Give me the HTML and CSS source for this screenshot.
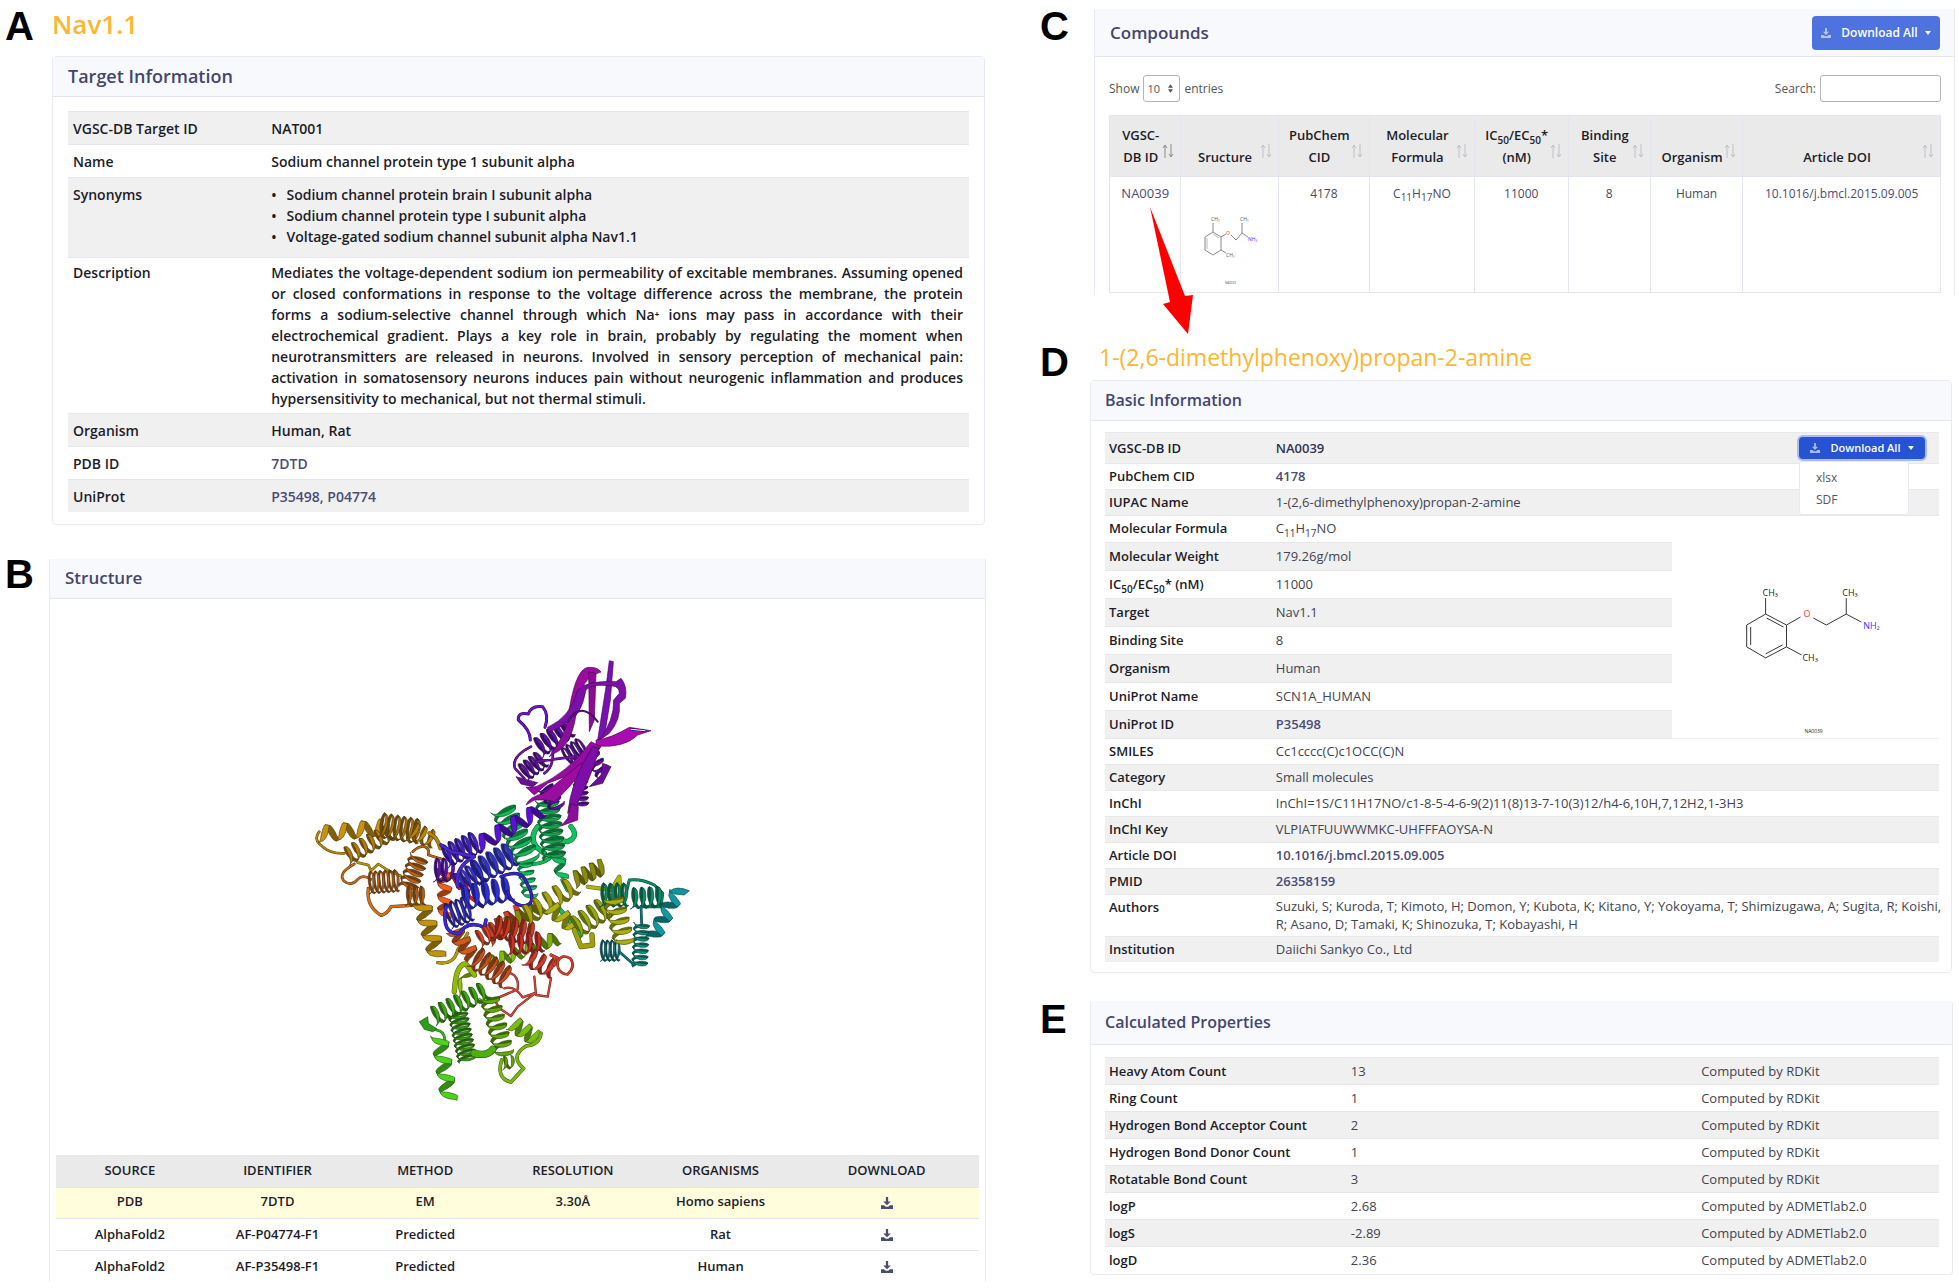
FILE: index.html
```html
<!DOCTYPE html>
<html lang="en">
<head>
<meta charset="utf-8">
<title>VGSC-DB</title>
<link rel="stylesheet" href="styles.css">
</head>
<body>
<svg class="defs" aria-hidden="true">
  <symbol id="download" viewBox="0 0 16 16">
    <path d="M6.5 0h3v6H13L8 11 3 6h3.500zM0 11h4l2.500 2h3L12 11h4v5H0z" fill="currentColor"/>
  </symbol>
  <symbol id="sort" viewBox="0 0 12 16">
    <path class="up" d="M3 15V2M1 5l2-3 2 3"/>
    <path class="down" d="M9 1v13M7 11l2 3 2-3"/>
  </symbol>
</svg>
<main class="page">
  <div class="column">
    <section class="panel target">
      <span class="letter">A</span>
      <div class="content">
        <h1 class="name">Nav1.1</h1>
        <article class="card">
          <h2 class="card-head">Target Information</h2>
          <div class="card-body">
            <table class="facts">
              <tr><th>VGSC-DB Target ID</th><td>NAT001</td></tr>
              <tr><th>Name</th><td>Sodium channel protein type 1 subunit alpha</td></tr>
              <tr class="roomy"><th>Synonyms</th><td><ul><li>Sodium channel protein brain I subunit alpha</li><li>Sodium channel protein type I subunit alpha</li><li>Voltage-gated sodium channel subunit alpha Nav1.1</li></ul></td></tr>
              <tr class="prose"><th>Description</th><td>Mediates the voltage-dependent sodium ion permeability of excitable membranes. Assuming opened or closed conformations in response to the voltage difference across the membrane, the protein forms a sodium-selective channel through which Na⁺ ions may pass in accordance with their electrochemical gradient. Plays a key role in brain, probably by regulating the moment when neurotransmitters are released in neurons. Involved in sensory perception of mechanical pain: activation in somatosensory neurons induces pain without neurogenic inflammation and produces hypersensitivity to mechanical, but not thermal stimuli.</td></tr>
              <tr><th>Organism</th><td>Human, Rat</td></tr>
              <tr><th>PDB ID</th><td><a href="#7DTD">7DTD</a></td></tr>
              <tr><th>UniProt</th><td><a href="#P35498">P35498, P04774</a></td></tr>
            </table>
          </div>
        </article>
      </div>
    </section>
    <section class="panel structure">
      <span class="letter">B</span>
      <div class="content">
        <article class="card open">
          <h2 class="card-head">Structure</h2>
          <div class="viewer"><svg id="protein" viewBox="-9 -123 1380 1668" role="img" aria-label="Structure of 7DTD"></svg></div>
          <table class="models">
            <thead><tr><th>SOURCE</th><th>IDENTIFIER</th><th>METHOD</th><th>RESOLUTION</th><th>ORGANISMS</th><th class="wide">DOWNLOAD</th></tr></thead>
            <tbody>
              <tr class="active"><td>PDB</td><td>7DTD</td><td>EM</td><td>3.30Å</td><td>Homo sapiens</td><td><a href="#pdb" aria-label="Download 7DTD"><svg class="icon"><use href="#download"/></svg></a></td></tr>
              <tr><td>AlphaFold2</td><td>AF-P04774-F1</td><td>Predicted</td><td></td><td>Rat</td><td><a href="#rat" aria-label="Download AF-P04774-F1"><svg class="icon"><use href="#download"/></svg></a></td></tr>
              <tr><td>AlphaFold2</td><td>AF-P35498-F1</td><td>Predicted</td><td></td><td>Human</td><td><a href="#human" aria-label="Download AF-P35498-F1"><svg class="icon"><use href="#download"/></svg></a></td></tr>
            </tbody>
          </table>
        </article>
      </div>
    </section>
  </div>

  <div class="column">
    <section class="panel compounds">
      <span class="letter">C</span>
      <div class="content">
        <article class="card open">
          <div class="card-head"><h2>Compounds</h2><button class="download" type="button"><svg class="icon"><use href="#download"/></svg>Download All<i class="caret"></i></button></div>
          <div class="card-body">
            <div class="tools">
              <label>Show <span class="picker"><select><option>10</option></select><svg viewBox="0 0 6 10"><path d="M3 0l3 4H0zM3 10L0 6h6z"/></svg></span> entries</label>
              <label>Search: <input type="search"></label>
            </div>
            <table class="grid">
              <colgroup><col class="c1"><col class="c2"><col class="c3"><col class="c4"><col class="c5"><col class="c6"><col class="c7"><col class="c8"></colgroup>
              <thead><tr>
                <th class="sorted">VGSC-<br>DB ID<svg><use href="#sort"/></svg></th>
                <th>Sructure<svg><use href="#sort"/></svg></th>
                <th>PubChem<br>CID<svg><use href="#sort"/></svg></th>
                <th>Molecular<br>Formula<svg><use href="#sort"/></svg></th>
                <th>IC<sub>50</sub>/EC<sub>50</sub>*<br>(nM)<svg><use href="#sort"/></svg></th>
                <th>Binding<br>Site<svg><use href="#sort"/></svg></th>
                <th>Organism<svg><use href="#sort"/></svg></th>
                <th>Article DOI<svg><use href="#sort"/></svg></th>
              </tr></thead>
              <tbody><tr>
                <td class="id"><a href="#NA0039">NA0039</a></td>
                <td><svg class="thumb" viewBox="0 0 56 74">
                  <path d="M11 12v9l8 5v13l-8 5-8-5V26l8-5M19 26l5-3M29 24l5 5 6-7V12M40 22l6 4M19 39l5 3" fill="none" stroke="#888"/>
                  <path d="M5 27v11M11 23l6 4" fill="none" stroke="#bbb"/>
                  <g font-size="5" fill="#555"><text x="9" y="10">CH₃</text><text x="38" y="10">CH₃</text><text x="24" y="46">CH₃</text><text x="23" y="73" font-size="3">NA0039</text></g>
                  <text x="24" y="24" font-size="5" fill="#f33">O</text><text x="46" y="30" font-size="5" fill="#33f">NH₂</text>
                </svg></td>
                <td>4178</td><td>C<sub>11</sub>H<sub>17</sub>NO</td><td>11000</td><td>8</td><td>Human</td><td><a href="#doi">10.1016/j.bmcl.2015.09.005</a></td>
              </tr></tbody>
            </table>
          </div>
        </article>
      </div>
      <svg class="arrow" viewBox="0 0 43 127"><path d="M0 0L35 89l8-1-5 39L13 97l7-2z" fill="#f00"/></svg>
    </section>

    <section class="panel basic">
      <span class="letter">D</span>
      <div class="content">
        <h1 class="name">1-(2,6-dimethylphenoxy)propan-2-amine</h1>
        <article class="card">
          <h2 class="card-head">Basic Information</h2>
          <div class="card-body">
            <div class="menu-box">
              <button class="download active" type="button"><svg class="icon"><use href="#download"/></svg>Download All<i class="caret"></i></button>
              <div class="menu"><a href="#xlsx">xlsx</a><a href="#sdf">SDF</a></div>
            </div>
            <table class="facts light">
              <colgroup><col class="k"><col><col class="pic"></colgroup>
              <tr class="first"><th>VGSC-DB ID</th><td colspan="2"><b>NA0039</b></td></tr>
              <tr><th>PubChem CID</th><td colspan="2"><a href="#4178"><b>4178</b></a></td></tr>
              <tr><th>IUPAC Name</th><td colspan="2">1-(2,6-dimethylphenoxy)propan-2-amine</td></tr>
              <tr class="formula"><th>Molecular Formula</th><td>C<sub>11</sub>H<sub>17</sub>NO</td>
                <td class="picture" rowspan="8"><svg viewBox="0 -26 268 222">
                  <path d="M94 56v16l21 11v22l-21 11-19-11V83l19-11M79 85v18M95 76l17 9M94 112l17-9M115 83l14-8M142 76l13 7 20-11V56M175 72l15 8M115 105l15 8" fill="none" stroke="#333"/>
                  <g font-size="9" fill="#222"><text x="91" y="54">CH₃</text><text x="171" y="54">CH₃</text><text x="131" y="119">CH₃</text></g>
                  <text x="132" y="75" font-size="9" fill="#f33">O</text><text x="192" y="87" font-size="9" fill="#33f">NH₂</text><text x="133" y="191" font-size="5" fill="#222">NA0039</text>
                </svg></td></tr>
              <tr class="mid"><th>Molecular Weight</th><td>179.26g/mol</td></tr>
              <tr class="mid"><th>IC<sub>50</sub>/EC<sub>50</sub>* (nM)</th><td>11000</td></tr>
              <tr class="mid"><th>Target</th><td>Nav1.1</td></tr>
              <tr class="mid"><th>Binding Site</th><td>8</td></tr>
              <tr class="mid"><th>Organism</th><td>Human</td></tr>
              <tr class="mid"><th>UniProt Name</th><td>SCN1A_HUMAN</td></tr>
              <tr class="mid"><th>UniProt ID</th><td><a href="#P35498"><b>P35498</b></a></td></tr>
              <tr><th>SMILES</th><td colspan="2">Cc1cccc(C)c1OCC(C)N</td></tr>
              <tr><th>Category</th><td colspan="2">Small molecules</td></tr>
              <tr><th>InChI</th><td colspan="2">InChI=1S/C11H17NO/c1-8-5-4-6-9(2)11(8)13-7-10(3)12/h4-6,10H,7,12H2,1-3H3</td></tr>
              <tr><th>InChI Key</th><td colspan="2">VLPIATFUUWWMKC-UHFFFAOYSA-N</td></tr>
              <tr><th>Article DOI</th><td colspan="2"><a href="#doi"><b>10.1016/j.bmcl.2015.09.005</b></a></td></tr>
              <tr><th>PMID</th><td colspan="2"><a href="#pmid"><b>26358159</b></a></td></tr>
              <tr class="authors"><th>Authors</th><td colspan="2">Suzuki, S; Kuroda, T; Kimoto, H; Domon, Y; Kubota, K; Kitano, Y; Yokoyama, T; Shimizugawa, A; Sugita, R; Koishi,<br>R; Asano, D; Tamaki, K; Shinozuka, T; Kobayashi, H</td></tr>
              <tr><th>Institution</th><td colspan="2">Daiichi Sankyo Co., Ltd</td></tr>
            </table>
          </div>
        </article>
      </div>
    </section>

    <section class="panel properties">
      <span class="letter">E</span>
      <div class="content">
        <article class="card">
          <h2 class="card-head">Calculated Properties</h2>
          <div class="card-body">
            <table class="facts light">
              <colgroup><col class="p1"><col class="p2"><col></colgroup>
              <tr><th>Heavy Atom Count</th><td>13</td><td>Computed by RDKit</td></tr>
              <tr><th>Ring Count</th><td>1</td><td>Computed by RDKit</td></tr>
              <tr><th>Hydrogen Bond Acceptor Count</th><td>2</td><td>Computed by RDKit</td></tr>
              <tr><th>Hydrogen Bond Donor Count</th><td>1</td><td>Computed by RDKit</td></tr>
              <tr><th>Rotatable Bond Count</th><td>3</td><td>Computed by RDKit</td></tr>
              <tr><th>logP</th><td>2.68</td><td>Computed by ADMETlab2.0</td></tr>
              <tr><th>logS</th><td>-2.89</td><td>Computed by ADMETlab2.0</td></tr>
              <tr><th>logD</th><td>2.36</td><td>Computed by ADMETlab2.0</td></tr>
            </table>
          </div>
        </article>
      </div>
    </section>
  </div>
</main>
<script src="protein.js"></script>
</body>
</html>
```
FILE: styles.css
```css
* { box-sizing: border-box; }
body { margin: 0; background: #fff; color: #1c1c28; font: 14px/21px "Open Sans", "Noto Sans", sans-serif; }
h1, h2 { margin: 0; font-weight: 600; }
a { color: #4b4c74; text-decoration: none; }
b { font-weight: 600; }
sub { font-size: 10px; line-height: 0; }
table { width: 100%; border-collapse: collapse; table-layout: fixed; }
th, td { padding: 0; font-weight: 600; }
.defs { position: absolute; width: 0; height: 0; }

.page { display: grid; grid-template-columns: minmax(0, 986fr) minmax(0, 915fr); column-gap: 54px; padding-right: 4px; }
.panel { display: grid; grid-template-columns: 49px minmax(0, 1fr); position: relative; }
.column + .column .panel { grid-template-columns: 50px minmax(0, 1fr); }
.letter { font: bold 40px/40px "Liberation Sans", Arial, sans-serif; color: #000; }
.column:first-child .letter { padding-left: 5px; }
.name { color: #fbb634; }

.card { border: 1px solid #e9ebf4; border-radius: 4px; }
.card.open { border-top: 0; border-bottom: 0; border-radius: 0; }
.card-head { display: flex; align-items: center; justify-content: space-between; height: 40px; padding: 0 15px 1px; background: #f8f9fd; border-bottom: 1px solid #e3e6f0; color: #45466e; font-size: 17px; line-height: 24px; }
.card-head h2 { font-size: 17px; }
.card-body { padding: 12px 15px; position: relative; }

.facts th, .facts td { padding: 6px 6px 5px 5px; border-top: 1px solid #e6e8ee; text-align: left; vertical-align: top; }
.facts th { width: 22%; }
.facts tr:nth-child(odd) > * { background: #f0f0f0; }
.facts ul { margin: 0; padding: 0; list-style: none; }
.facts li { display: flex; gap: 10px; }
.facts li::before { content: "•"; }
.facts .roomy > * { padding-bottom: 10px; }
.facts .prose td { text-align: justify; }
.facts .prose > * { padding: 4px 6px 4px 5px; }

.target { height: 526px; }
.target .letter { padding-top: 6px; }
.target .content { padding: 0 1px 0 3px; }
.target .name { height: 56px; padding-top: 6px; font-size: 26px; line-height: 36px; }
.target .card-head { font-size: 18px; }
.target .card-body { padding-top: 14px; }

.structure { margin-top: 32px; }
.structure .letter { margin-top: -4px; }
.structure .content { padding-top: 1px; }
.viewer { height: 556px; display: flex; justify-content: center; }
.viewer svg { width: 460px; height: 556px; }
.models { width: auto; min-width: calc(100% - 12px); margin: 0 6px; font-size: 13px; text-align: center; }
.models th { width: 16%; }
.models th, .models td { height: 32px; border-bottom: 1px solid #e3e6f0; }
.models thead { background: #eaeaea; }
.models .wide { width: 20%; }
.models .active { background: #fffddc; }
.models .active td { height: 31px; padding-bottom: 2px; }
.models tr:last-child td { border-bottom: 0; }
.icon { width: 12px; height: 12px; vertical-align: middle; }

.download { display: flex; align-items: center; justify-content: center; gap: 10px; border: 0; border-radius: 4px; background: #4e73df; color: #fff; font: 600 12px/16px "Open Sans", "Noto Sans", sans-serif; width: 128px; height: 34px; padding: 0; }
.download .icon { width: 10px; height: 12px; opacity: .6; }
.caret { border: 3px solid transparent; border-top: 4px solid #fff; border-bottom: 0; margin-left: -3px; }

.compounds { padding-top: 9px; height: 344px; }
.compounds .letter { margin-top: -3px; }
.compounds .content { padding-left: 4px; height: 286px; overflow: hidden; }
.compounds .card-head { height: 48px; padding: 1px 14px 0 15px; }
.compounds .card-body { padding: 18px 13px 0 14px; height: 239px; }
.tools { display: flex; justify-content: space-between; margin-bottom: 13px; font-size: 12px; color: #555; }
.tools label { display: flex; align-items: center; gap: 4px; }
.picker { display: flex; align-items: center; position: relative; }
.picker svg { position: absolute; right: 7px; width: 5px; height: 9px; fill: #555; }
.tools select, .tools input { height: 27px; border: 1px solid #b5b5b5; border-radius: 3px; background: #fff; color: #555; font: 11px "Open Sans", sans-serif; outline: 0; }
.tools select { appearance: none; width: 37px; padding: 0 3px; }
.tools input { width: 121px; }
.grid { font-size: 12px; text-align: center; }
.grid .c1 { width: 8.600%; } .grid .c2 { width: 11.700%; } .grid .c3 { width: 11%; } .grid .c4 { width: 12.600%; }
.grid .c5 { width: 11.300%; } .grid .c6 { width: 9.900%; } .grid .c7 { width: 11.100%; }
.grid th, .grid td { border: 1px solid #e3e6f0; position: relative; }
.grid th { height: 61px; padding: 0 12px 8px 3px; background: #eaeaea; font-size: 13px; line-height: 22px; vertical-align: bottom; white-space: nowrap; }
.grid th svg { position: absolute; right: 6px; top: 27px; width: 12px; height: 16px; fill: none; stroke: #c0c0c8; }
.grid .sorted svg { stroke: #8a8a94; }
.grid td { height: 116px; padding: 6px 0 0; font-weight: 400; color: #4a4a5c; vertical-align: top; white-space: nowrap; }
.grid .id { font-size: 13px; }
.thumb { display: block; width: 56px; height: 74px; margin: 28px auto 0; }
.arrow { position: absolute; left: 110px; top: 207px; width: 43px; height: 127px; }

.basic .letter { margin-top: -2px; }
.basic .content { padding-right: 3px; }
.basic .name { height: 36px; padding-left: 9px; font-size: 23px; line-height: 27px; font-weight: 400; }
.basic .card-head { font-size: 16px; padding: 0 14px 2px; }
.basic .card-body { padding: 11px 12px 10px 14px; }
.light { font-size: 13px; line-height: 20px; }
.light td { font-weight: 400; color: #43434f; }
.light b { color: #33334c; }
.light a b { color: #4b4c74; }
.facts.light th, .facts.light td { width: auto; padding: 2px 0 3px 4px; }
.light .k { width: 20%; }
.light .pic { width: 32%; }
.facts.light .first > * { padding: 5px 0 5px 4px; }
.facts.light .formula > * { padding: 2px 0 4px 4px; }
.facts.light .mid > * { padding: 3px 0 4px 4px; }
.facts.light .formula .picture { padding: 0; background: #fff; vertical-align: top; border-bottom: 1px solid #f0f0f4; }
.picture svg { display: block; width: 100%; height: 222px; }
.light .authors td { line-height: 18px; white-space: nowrap; }
.menu-box { position: absolute; right: 26px; top: 16px; z-index: 1; }
.menu-box .download { width: 126px; height: 22px; font-size: 11px; background: #2653d4; box-shadow: 0 0 0 2px #a9bbf0; }
.menu { width: 110px; height: 54px; margin-top: 2px; padding: 5px 16px; background: #fff; border: 1px solid #e8eaf2; border-radius: 3px; display: flex; flex-direction: column; font-size: 12px; line-height: 22px; }
.menu a { color: #55555f; }

.properties { margin-top: 27px; }
.properties .letter { margin-top: -1px; }
.properties .content { padding-right: 2px; }
.properties .card { border-top-color: #fff; }
.properties .card-head { font-size: 16px; height: 44px; padding: 0 14px 1px; }
.properties .card-body { padding: 12px 13px 1px 14px; }
.properties .facts th, .properties .facts td { padding: 3px 0 3px 4px; }
.properties .p1 { width: 29%; }
.properties .p2 { width: 42%; }
```
FILE: protein.js
```js
// Ribbon drawing of the channel: helices, loops and strands in viewer units.
const svg = document.getElementById('protein');

function tone(hex, k) {
  const n = parseInt(hex.slice(1), 16);
  return 'rgb(' + [n >> 16, n >> 8 & 255, n & 255].map(v => Math.min(255, Math.round(v * k))) + ')';
}
function add(d, attrs) {
  const p = document.createElementNS('http://www.w3.org/2000/svg', 'path');
  p.setAttribute('d', d);
  for (const k in attrs) p.setAttribute(k, attrs[k]);
  svg.appendChild(p);
}
function helix(x1, y1, x2, y2, r, turns, color, width) {
  const len = Math.hypot(x2 - x1, y2 - y1), ux = (x2 - x1) / len, uy = (y2 - y1) / len;
  const w = (width || len / turns * 0.45) / 2, halves = Math.round(turns * 2), steps = 12;
  const depth = width ? 0.1 : 0.32;
  const at = (t, side) => {
    const a = Math.PI * halves * t;
    const s = len * t + w * side * (1 - 0.3 * Math.abs(Math.cos(a))) + r * depth * Math.sin(a);
    const o = (r - side * 2) * Math.cos(a);
    return (x1 + ux * s - uy * o).toFixed(1) + ' ' + (y1 + uy * s + ux * o).toFixed(1);
  };
  for (const front of [1, 0]) for (let h = 0; h < halves; h++) {
    if (h % 2 !== front) continue;
    const a = [], b = [];
    for (let i = 0; i <= steps; i++) { const t = (h + i / steps) / halves; a.push(at(t, -1)); b.unshift(at(t, 1)); }
    add('M' + a.concat(b).join('L') + 'Z', { fill: tone(color, front ? 0.65 : 1), stroke: tone(color, 0.45), 'stroke-width': 2, 'stroke-linejoin': 'round' });
  }
}
function loop(d, color, w) {
  const base = { fill: 'none', 'stroke-linecap': 'round', 'stroke-linejoin': 'round' };
  add(d, { ...base, stroke: tone(color, 0.5), 'stroke-width': (w || 6) + 2 });
  add(d, { ...base, stroke: color, 'stroke-width': (w || 6) - 1 });
}
function strand(d, color) {
  add(d, { fill: color, stroke: tone(color, 0.5), 'stroke-width': 2, 'stroke-linejoin': 'round' });
}

// Gold and brown domain, left
loop('M85 575Q65 600 95 620Q120 642 160 640', '#b8860b');
loop('M200 668L232 675L240 692L262 672L292 692L330 708', '#b8940b');
loop('M190 672Q140 700 158 722Q180 742 200 718Q215 702 240 718', '#c06a1c');
helix(85, 582, 275, 562, 24, 3.5, '#c8940e', 20);
helix(165, 650, 300, 575, 26, 6, '#b07a12');
helix(268, 555, 385, 575, 36, 6, '#a8740e');
helix(360, 570, 430, 600, 26, 3, '#b8820e');
loop('M415 580Q440 590 448 625', '#b8820e', 10);
loop('M232 745Q225 800 270 826Q290 820 300 800L380 795', '#d0701c', 8);
helix(235, 728, 322, 722, 32, 6, '#b8641a');
helix(385, 650, 350, 745, 28, 5, '#b8641a');
loop('M365 635Q400 605 413 632L412 645L455 658', '#b8641a');
helix(345, 768, 402, 768, 28, 3, '#b4641a');
helix(392, 790, 440, 950, 26, 3.5, '#c0940e', 20);
loop('M440 968Q490 975 500 930L530 880', '#b89a10', 8);
// Orange and red core
helix(460, 690, 462, 830, 20, 3.5, '#f0601c', 18);
loop('M480 700L505 745L520 715L535 770L575 800', '#e02020', 8);
helix(490, 870, 545, 950, 24, 3, '#d05a1c', 18);
helix(590, 890, 690, 820, 30, 3.500, '#d8402a', 18);
// Lime linkers
helix(495, 1060, 545, 985, 14, 1, '#94c010', 18);
loop('M490 1055Q495 970 525 972L550 1005', '#94b810', 14);
helix(590, 970, 690, 935, 20, 3, '#80c010', 16);
helix(700, 925, 800, 895, 20, 3, '#80b010', 18);
helix(640, 860, 740, 800, 22, 3, '#8c8a10', 18);
// Green domain, upper centre
loop('M700 670Q760 680 790 640L820 660', '#10b855', 10);
loop('M840 560Q865 590 830 605L790 600', '#12c060', 14);
loop('M740 560Q715 590 735 620L760 640', '#12c060', 14);
helix(635, 505, 712, 660, 36, 6.5, '#10b855');
helix(700, 665, 718, 768, 22, 4.5, '#12c060');
helix(768, 480, 790, 655, 34, 8, '#0fa850');
helix(800, 650, 815, 715, 18, 1.5, '#12c060', 16);
loop('M815 720L830 750M800 800L825 830L870 885', '#12c070', 12);
// Indigo and blue domain
helix(560, 615, 750, 510, 24, 4, '#5a12d8', 20);
helix(430, 690, 480, 690, 34, 2.5, '#5a12b8');
helix(460, 650, 560, 605, 34, 5, '#4420c8');
helix(550, 700, 665, 640, 38, 5, '#3034c8');
helix(500, 735, 570, 690, 34, 4, '#3830d0');
helix(510, 775, 660, 745, 36, 5, '#3030d8');
helix(470, 830, 535, 805, 38, 4, '#3430c0');
loop('M450 615L480 635L550 650Q490 680 500 740', '#4828d0', 9);
loop('M630 710Q690 685 705 725Q740 785 705 797Q665 800 650 755', '#3424b8', 8);
loop('M465 800Q450 885 505 880Q530 840 580 862L585 840', '#3c28d0', 9);
// Red sheet of helices
helix(560, 900, 620, 865, 26, 3, '#d0482a');
helix(610, 860, 730, 880, 34, 5, '#cc3c22');
helix(550, 950, 650, 1015, 34, 5, '#c8501e');
helix(650, 915, 755, 905, 30, 4, '#cc3028');
helix(710, 950, 790, 990, 28, 3, '#d03a2a');
loop('M780 945L800 955L790 975', '#d8402a', 8);
loop('M800 965Q810 940 838 955Q855 980 830 1003Q795 1000 800 960', '#d8402a');
loop('M780 1015L770 1070L735 1065L730 1010M640 1045Q670 1035 695 1072L735 1058L680 1100L660 1128L625 1105L610 1078L680 1048Q685 1010 660 1000', '#d8483a', 5);
// Olive domain
helix(700, 830, 850, 735, 30, 5, '#a8a410');
helix(850, 720, 935, 680, 24, 3.5, '#8c8c0c', 16);
helix(775, 800, 850, 860, 24, 2.5, '#b0b414', 18);
helix(850, 865, 945, 800, 34, 4, '#98a810');
loop('M850 870L870 920L905 915L903 885', '#a0a010', 14);
loop('M890 740L960 750L985 710L990 780', '#b0b414', 10);
// Teal domain, right
loop('M1005 760L1015 720Q1050 715 1090 735L1115 760L1110 800L1050 800', '#0d8c60', 7);
helix(930, 765, 1010, 765, 34, 4, '#0d8c60');
helix(1020, 775, 1115, 770, 30, 4, '#0d8c68');
helix(1155, 765, 1085, 895, 22, 3, '#109aa0', 20);
strand('M1135 755Q1155 735 1195 752L1180 765L1150 762Z', '#10949a');
helix(1052, 850, 1046, 980, 22, 7, '#0f9080');
helix(930, 932, 985, 932, 30, 4, '#0b7a80');
loop('M985 935L1030 975M1050 800L1052 850', '#0b7a80', 6);
helix(965, 770, 1000, 905, 30, 4.5, '#a8b010');
// Green domain, bottom
helix(425, 1130, 585, 1050, 28, 7, '#3ea814');
helix(500, 1120, 530, 1262, 28, 9, '#38a010');
strand('M385 1145L410 1130L412 1150L440 1168L425 1175L400 1168Z', '#2e9c1c');
loop('M435 1170Q460 1172 462 1200', '#3cb818', 6);
helix(445, 1190, 475, 1378, 24, 3.5, '#4cd41c', 20);
helix(595, 1070, 640, 1240, 28, 6.5, '#62a80e');
loop('M550 1240Q590 1250 605 1228', '#4cb010', 20);
helix(665, 1150, 735, 1195, 24, 2.5, '#78c010', 18);
loop('M750 1180Q745 1215 705 1218Q655 1250 698 1285L660 1326Q615 1315 632 1260', '#78b810', 9);
helix(635, 1270, 665, 1265, 18, 1.5, '#64a010');
// Violet helices, top
helix(740, 325, 835, 262, 30, 5, '#5c10a8');
helix(695, 400, 755, 355, 28, 4, '#5a109c');
helix(825, 355, 880, 320, 32, 4, '#5a109c');
helix(900, 340, 935, 400, 22, 3, '#64109c');
helix(868, 420, 872, 500, 20, 5, '#64109c');
helix(760, 440, 800, 500, 24, 3.5, '#5c10a8');
loop('M718 300Q718 270 682 240Q680 215 712 222Q720 195 755 200Q775 225 762 262', '#6a16c0', 7);
loop('M720 320Q660 350 672 385L700 415M785 330Q790 380 760 400M735 365L850 350', '#7014a8', 6);
// Magenta strands, top
strand('M955 62L967 65L958 180L940 290L920 300L945 140Z', '#7a10b4');
strand('M830 240Q850 90 890 82Q920 80 930 96Q880 110 870 160Q850 230 838 245Z', '#9c0ca0');
strand('M893 95L915 100L910 240L895 275Z', '#8e0c94');
strand('M770 262Q840 230 860 150Q890 120 975 125L990 115Q1010 140 1003 175L985 190Q990 240 955 280L925 300Q970 240 968 180L985 160Q985 140 965 138Q900 130 885 150Q870 230 830 245Q800 270 770 275Z', '#7c0fa8');
strand('M775 350Q820 290 830 240L855 225Q840 320 790 340Z', '#8a109c');
loop('M830 245Q870 180 920 245', '#64109c', 4);
strand('M915 300Q960 295 1015 262L1080 272L1040 285Q1000 325 915 318Z', '#a80cae');
loop('M1020 268L1062 272', '#fff', 4);
strand('M900 305L930 320Q880 395 770 430L730 465L705 442L735 440Q830 400 900 305Z', '#940ca0');
strand('M705 495Q715 470 760 460L870 370L885 380Q830 450 790 485L765 480L730 480Z', '#9c0ca0');
strand('M905 320L925 325Q905 400 855 500L830 520Q840 420 905 320Z', '#7c0fa8');
strand('M675 410L740 428L725 440L690 432ZM935 370L960 380L935 430L895 440L930 405Z', '#6a1098');
strand('M840 490L862 500L860 540L810 558L830 535Z', '#8a109c');
```
